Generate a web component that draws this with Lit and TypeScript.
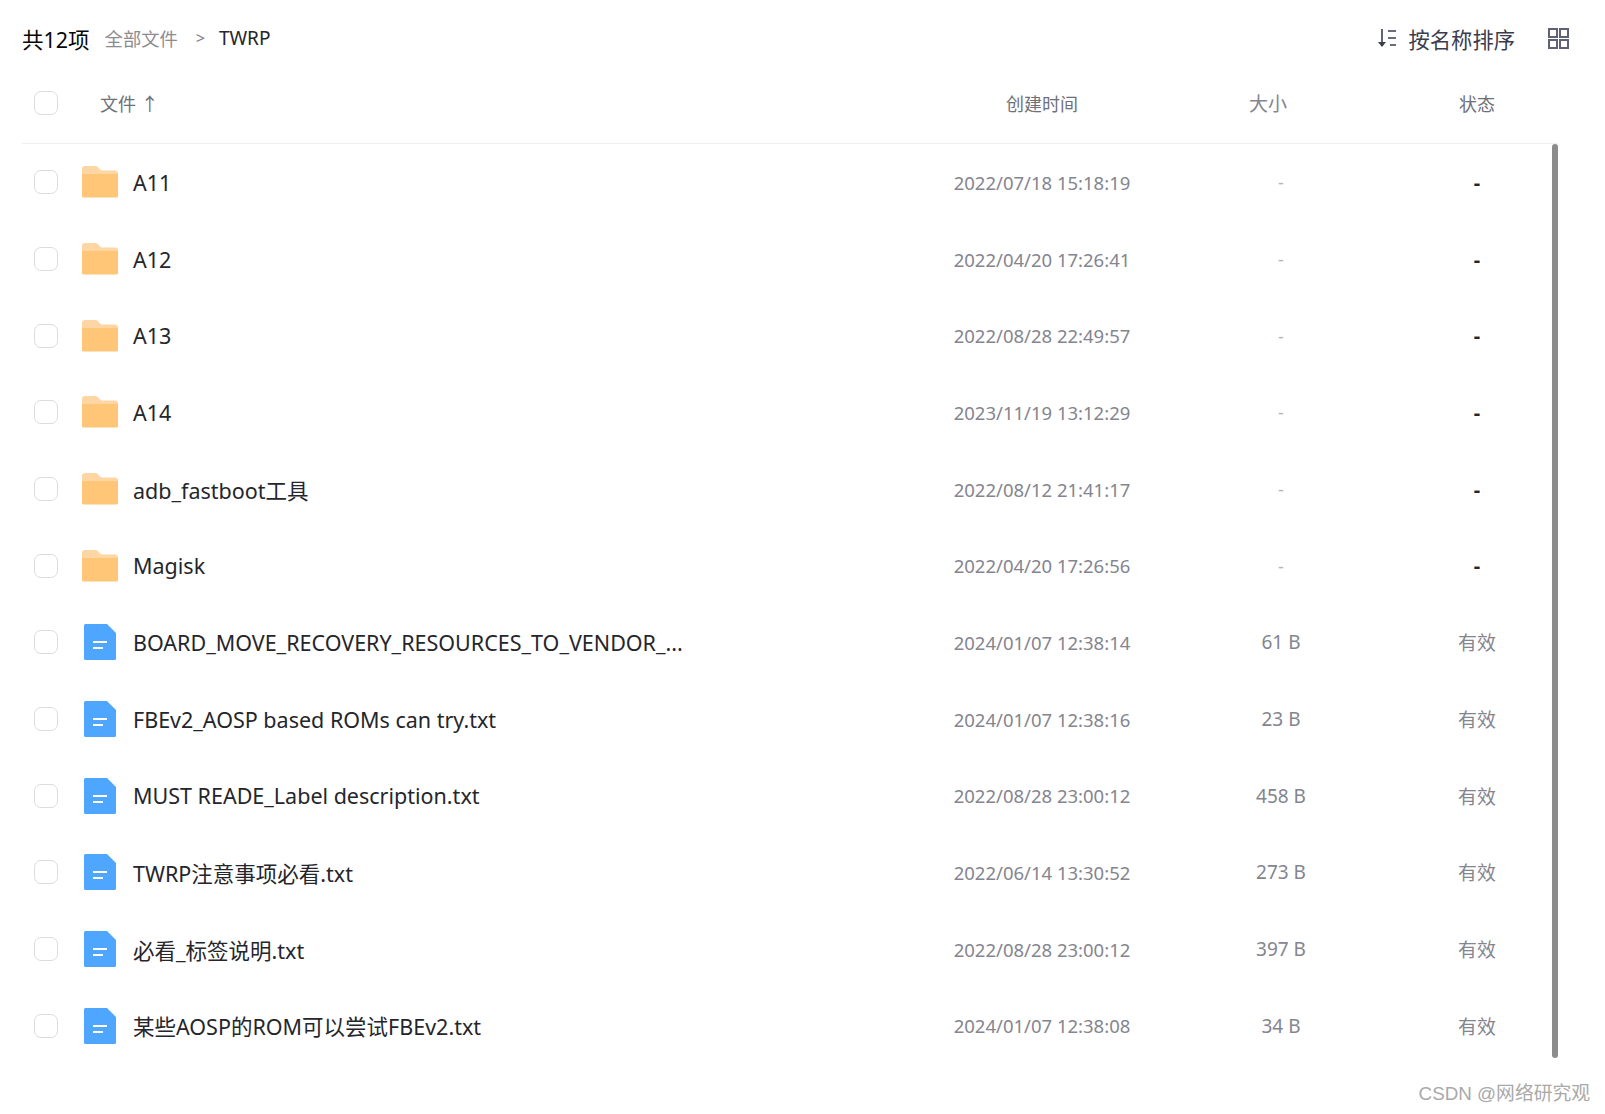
import { LitElement, html, css, svg } from "lit";
import { customElement } from "lit/decorators.js";

const ROWS: [string, string, string, string, boolean][] = [
  ["A11", "2022/07/18 15:18:19", "-", "-", true],
  ["A12", "2022/04/20 17:26:41", "-", "-", true],
  ["A13", "2022/08/28 22:49:57", "-", "-", true],
  ["A14", "2023/11/19 13:12:29", "-", "-", true],
  ["adb_fastboot工具", "2022/08/12 21:41:17", "-", "-", true],
  ["Magisk", "2022/04/20 17:26:56", "-", "-", true],
  ["BOARD_MOVE_RECOVERY_RESOURCES_TO_VENDOR_...", "2024/01/07 12:38:14", "61 B", "有效", false],
  ["FBEv2_AOSP based ROMs can try.txt", "2024/01/07 12:38:16", "23 B", "有效", false],
  ["MUST READE_Label description.txt", "2022/08/28 23:00:12", "458 B", "有效", false],
  ["TWRP注意事项必看.txt", "2022/06/14 13:30:52", "273 B", "有效", false],
  ["必看_标签说明.txt", "2022/08/28 23:00:12", "397 B", "有效", false],
  ["某些AOSP的ROM可以尝试FBEv2.txt", "2024/01/07 12:38:08", "34 B", "有效", false],
];

const folder = svg`<svg class="ico" width="36" height="32" viewBox="0 0 36 32">
  <path d="M0 3a3 3 0 0 1 3-3h10c1.500 0 2.500.6 3.500 1.700L19 4.500h14a3 3 0 0 1 3 3V12H0z" fill="#fdd6a3"/>
  <path d="M0 8h36v22a1.500 1.500 0 0 1-1.500 1.500h-33A1.500 1.500 0 0 1 0 30z" fill="#fec676"/>
</svg>`;

const file = svg`<svg class="ico" width="36" height="36" viewBox="0 0 36 36">
  <path d="M2 1.500A1.500 1.500 0 0 1 3.500 0h21.500L34 9v25.500A1.500 1.500 0 0 1 32.500 36h-29A1.500 1.500 0 0 1 2 34.500z" fill="#4fa6ff"/>
  <rect x="11" y="17" width="14" height="2" fill="#fff"/>
  <rect x="11" y="23" width="10" height="2" fill="#fff"/>
</svg>`;

@customElement("app-root")
export class AppRoot extends LitElement {
  static styles = css`
    :host {
      display: block;
      position: relative;
      width: 1605px;
      height: 1114px;
      background: #fff;
      overflow: hidden;
      font-family: "Noto Sans", "Noto Sans CJK SC", sans-serif;
      color: #25262b;
    }
    .top {
      display: flex;
      align-items: center;
      height: 76px;
      padding: 0 36px 0 22px;
    }
    .count { font-size: 21.500px; color: #06070a; margin-right: 15px; }
    .crumb { font-size: 18.300px; color: #8c8c90; }
    .sep { font-size: 16px; color: #85818f; margin: 0 14px 0 18px; }
    .cur { font-size: 19px; color: #25262b; }
    .spacer { flex: 1; }
    .sort { font-size: 21.300px; color: #3b3d4d; margin: 0 33px 0 12px; }
    .top svg { display: block; }
    .head, .row {
      display: grid;
      grid-template-columns: 900px 240px 238px 154px 4px;
      margin: 0 47px 0 22px;
      align-items: center;
    }
    .head {
      height: 68px;
      padding-bottom: 14px;
      box-sizing: border-box;
      border-bottom: 1px solid #f0f0f2;
      font-size: 18px;
      color: #6e7079;
    }
    .namecell { display: flex; align-items: center; min-width: 0; }
    .box {
      width: 22px;
      height: 22px;
      border: 1px solid #dcdcdc;
      border-radius: 7px;
      margin-left: 12px;
      flex: none;
    }
    .head .label { margin-left: 42px; }
    .c { text-align: center; }
    .head .size { padding-right: 26px; }
    .row { height: 76.680px; }
    .slot { width: 36px; margin-left: 24px; margin-right: 15px; display: flex; justify-content: center; flex: none; }
    .ico { display: block; }
    .name { font-size: 21.500px; white-space: nowrap; color: #25262b; }
    .date { font-size: 18.500px; color: #84858f; }
    .size { font-size: 19px; color: #84858f; }
    .size.none { color: #b4b5bb; font-size: 18px; }
    .status { font-size: 19px; color: #84858f; }
    .status.none { color: #25262b; font-weight: 700; font-size: 20px; }
    .scroll {
      position: absolute;
      left: 1552px;
      top: 144px;
      width: 6px;
      height: 914px;
      border-radius: 3px;
      background: #8c8c8c;
    }
    .mark {
      position: absolute;
      right: 15px;
      top: 1082px;
      font-size: 18.800px;
      line-height: 24px;
      color: #a9a9a9;
      white-space: nowrap;
      font-family: "Liberation Sans", "Noto Sans CJK SC", sans-serif;
    }
  `;

  render() {
    return html`
      <div class="top">
        <span class="count">共12项</span>
        <span class="crumb">全部文件</span>
        <span class="sep">&gt;</span>
        <span class="cur">TWRP</span>
        <span class="spacer"></span>
        <svg width="20" height="20" viewBox="0 0 20 20" fill="none" stroke="#3b3d4d" stroke-width="1.600">
          <path d="M5 1v16" />
          <path d="M1 14l4 5 4-5z" fill="#3b3d4d" stroke="none" />
          <path d="M11 3h8M11 10h8M13 17h6" />
        </svg>
        <span class="sort">按名称排序</span>
        <svg class="grid-ico" width="21" height="21" viewBox="0 0 21 21" fill="none" stroke="#5f6277" stroke-width="2">
          <rect x="1" y="1" width="8" height="8" />
          <rect x="12" y="1" width="8" height="8" />
          <rect x="1" y="12" width="8" height="8" />
          <rect x="12" y="12" width="8" height="8" />
        </svg>
      </div>
      <div class="head">
        <div class="namecell"><span class="box"></span><span class="label">文件 ↑</span></div>
        <div class="c">创建时间</div>
        <div class="c size">大小</div>
        <div class="c">状态</div>
      </div>
      ${ROWS.map(
        ([n, d, s, st, isFolder]) => html`
          <div class="row">
            <div class="namecell">
              <span class="box"></span>
              <span class="slot">${isFolder ? folder : file}</span>
              <span class="name">${n}</span>
            </div>
            <div class="c date">${d}</div>
            <div class="c size ${isFolder ? "none" : ""}">${s}</div>
            <div class="c status ${isFolder ? "none" : ""}">${st}</div>
          </div>
        `
      )}
      <div class="scroll"></div>
      <div class="mark">CSDN @网络研究观</div>
    `;
  }
}
